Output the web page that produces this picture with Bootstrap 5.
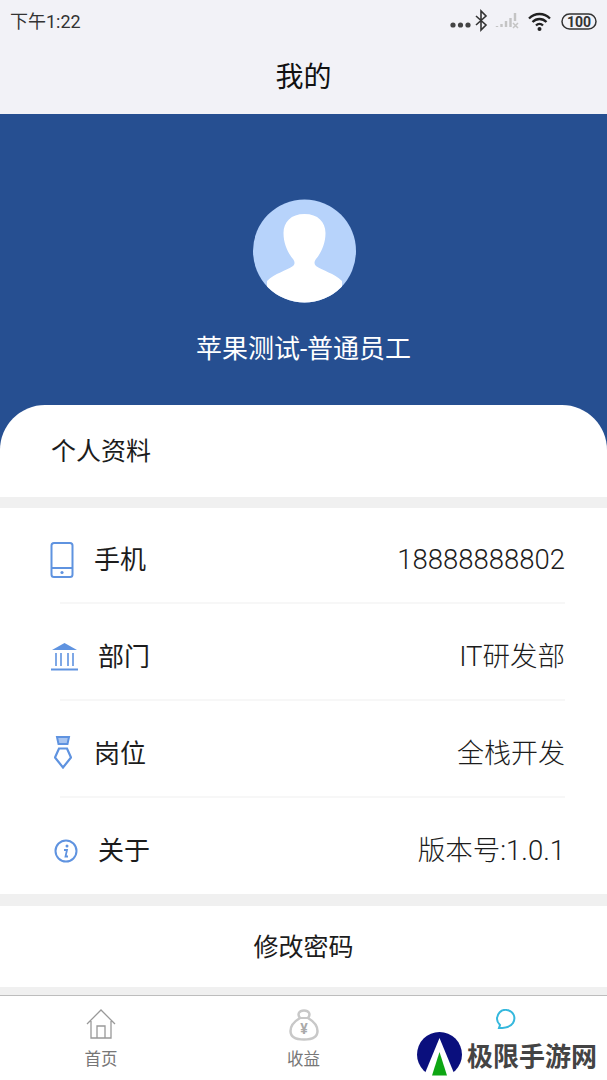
<!DOCTYPE html>
<html lang="zh-CN">

<head>
  <meta charset="UTF-8">
  <title>我的</title>
  <link href="https://cdn.jsdelivr.net/npm/bootstrap@5.3.3/dist/css/bootstrap.min.css" rel="stylesheet">
  <script src="https://cdn.jsdelivr.net/npm/bootstrap@5.3.3/dist/js/bootstrap.bundle.min.js"></script>
  <style>
    body {
      font-family: "Roboto", "Noto Sans CJK SC", sans-serif;
      background: #f0f0f0;
      color: #1c1c1c;
    }

    .phone {
      width: 607px;
      height: 1080px;
      overflow: hidden;
      position: relative;
    }

    .top-area {
      height: 114px;
      background: #f2f2f7;
    }

    .status-row {
      height: 42px;
      padding: 0 7px 0 10px;
    }

    .status-time {
      font-size: 18px;
      color: #333;
    }

    .page-title {
      height: 72px;
      font-size: 28px;
      line-height: 72px;
      color: #111;
    }

    .blue-area {
      height: 383px;
      background: #264f91;
      padding-top: 85px;
    }

    .avatar-pic {
      margin-left: 253px;
    }

    .user-name {
      margin-top: 29px;
      height: 34px;
      font-size: 26px;
      line-height: 34px;
      color: #fff;
    }

    .profile-head {
      margin-top: 39px;
      height: 92px;
      background: #fff;
      border-radius: 45px 45px 0 0;
      padding: 30px 0 0 51px;
      font-size: 25px;
      line-height: 34px;
    }

    .gap-band {
      height: 11px;
      background: #f0f0f0;
    }

    .gap-tall {
      height: 12px;
    }

    .info-list {
      background: #fff;
      height: 386px;
    }

    .info-row {
      height: 97px;
      font-size: 26px;
      padding: 7px 42px 0 0;
      position: relative;
    }

    .info-row + .info-row::before {
      content: "";
      position: absolute;
      left: 60px;
      right: 42px;
      top: -3px;
      border-top: 2px solid #f7f7f7;
    }

    .row-value {
      font-size: 27.5px;
      font-weight: 300;
    }

    .row-value-cjk {
      font-size: 27px;
      font-weight: 300;
    }

    .icon-cell {
      width: 94px;
      padding-left: 50px;
      flex: none;
    }

    .tie-icon {
      margin: -3px 0 0 4px;
    }

    .change-pass {
      height: 81px;
      background: #fff;
      font-size: 25px;
      line-height: 83px;
    }

    .tab-bar {
      height: 85px;
      background: #fff;
      border-top: 1px solid #bdbdbd;
      margin-top: 8px;
    }

    .tab-cell {
      width: 202px;
      font-size: 16.5px;
      color: #777;
      padding-top: 13px;
    }

    .tab-label {
      line-height: 24px;
      margin-top: 7px;
    }

    .mark-logo {
      position: absolute;
      left: 417px;
      top: 1032px;
      display: flex;
      align-items: center;
      gap: 5px;
      background: rgba(255, 255, 255, .85);
    }

    .mark-text {
      font-family: "Noto Sans CJK SC", sans-serif;
      font-size: 26px;
      font-weight: 700;
      color: #444;
      line-height: 44px;
    }
  </style>
</head>

<body>
  <div class="phone">
    <div class="top-area">
      <div class="status-row d-flex align-items-center justify-content-between">
        <span class="status-time">下午1:22</span>
        <svg width="150" height="24" viewBox="0 0 150 24">
          <circle cx="3" cy="16" r="2.6" fill="#444" />
          <circle cx="10.5" cy="16" r="2.6" fill="#444" />
          <circle cx="18" cy="16" r="2.6" fill="#444" />
          <path d="M26 7l10 9-5 5V2l5 5-10 9" fill="none" stroke="#333" stroke-width="1.6" />
          <path d="M47 17v1M51.5 15v3M56 12v6M60.5 9v9M65 4v8" stroke="#c4c4c4" stroke-width="2.4" fill="none" />
          <path d="M63 14l5 5m0-5l-5 5" stroke="#c4c4c4" stroke-width="1.5" fill="none" />
          <path d="M79 9.5c6-6 15-6 21 0M82.5 13c4-4 10-4 14 0M86 16.5c2-2 5-2 7 0" stroke="#222" stroke-width="2.3" fill="none" />
          <circle cx="89.5" cy="20" r="2" fill="#222" />
          <rect x="112" y="5" width="34" height="15" rx="7.5" fill="none" stroke="#333" stroke-width="1.5" />
          <text x="129" y="17.5" text-anchor="middle" font-family="Roboto, sans-serif" font-size="14" font-weight="700" fill="#333">100</text>
        </svg>
      </div>
      <div class="page-title text-center">我的</div>
    </div>

    <div class="blue-area text-center">
      <svg class="d-block avatar-pic" width="103" height="104" viewBox="0 0 103 104">
        <defs>
          <clipPath id="avatarClip">
            <circle cx="51.5" cy="52" r="51.5" />
          </clipPath>
        </defs>
        <circle cx="51.5" cy="52" r="51.5" fill="#b7d3fb" />
        <path clip-path="url(#avatarClip)" fill="#fff" d="M51.5 15C38 15 30.5 23 30.5 34C30.5 45 35 54 40 60C42 63 42 65 40 67C33 72 22 74 14 82L14 104H89V82C81 74 70 72 63 67C61 65 61 63 63 60C68 54 72.5 45 72.5 34C72.5 23 65 15 51.5 15Z" />
      </svg>
      <div class="user-name">苹果测试-普通员工</div>
      <div class="profile-head text-start">个人资料</div>
    </div>

    <div class="gap-band"></div>

    <div class="info-list">
      <div class="info-row d-flex align-items-center">
        <div class="icon-cell">
          <svg class="d-block" width="24" height="36" viewBox="0 0 24 36">
            <rect x="1.5" y="1" width="21" height="34" rx="2.5" fill="none" stroke="#5f93e0" stroke-width="2" />
            <path d="M1.5 26h21" stroke="#5f93e0" stroke-width="2" />
            <circle cx="12" cy="30.5" r="1.6" fill="#5f93e0" />
          </svg>
        </div>
        <span class="flex-grow-1">手机</span>
        <span class="row-value">18888888802</span>
      </div>
      <div class="info-row d-flex align-items-center">
        <div class="icon-cell">
          <svg class="d-block" width="29" height="28" viewBox="0 0 29 28">
            <path d="M14.5 0L27 7H2z" fill="#5f93e0" />
            <path d="M6 10v13M11 10v13M18 10v13M23 10v13" stroke="#5f93e0" stroke-width="1.6" />
            <path d="M1 26.5h27" stroke="#5f93e0" stroke-width="2" />
          </svg>
        </div>
        <span class="flex-grow-1 ps-1">部门</span>
        <span class="row-value">IT研发部</span>
      </div>
      <div class="info-row d-flex align-items-center">
        <div class="icon-cell">
          <svg class="d-block tie-icon" width="18" height="33" viewBox="0 0 18 33">
            <path d="M3 1h12l-1.5 7h-9z" fill="#a9c5f0" stroke="#5f93e0" stroke-width="2" />
            <path d="M5 12.5h8l4 9-8 10-8-10z" fill="none" stroke="#5f93e0" stroke-width="2.2" />
          </svg>
        </div>
        <span class="flex-grow-1">岗位</span>
        <span class="row-value-cjk">全栈开发</span>
      </div>
      <div class="info-row d-flex align-items-center">
        <div class="icon-cell">
          <svg class="d-block ms-1" width="24" height="24" viewBox="0 0 24 24">
            <circle cx="12" cy="12" r="10.5" fill="none" stroke="#5f93e0" stroke-width="2" />
            <circle cx="13" cy="7" r="1.5" fill="#5f93e0" />
            <path d="M10 11h3l-1.5 6.500H14" fill="none" stroke="#5f93e0" stroke-width="1.8" />
          </svg>
        </div>
        <span class="flex-grow-1 ps-1">关于</span>
        <span class="row-value">版本号:1.0.1</span>
      </div>
    </div>

    <div class="gap-band gap-tall"></div>

    <div class="change-pass text-center">修改密码</div>

    <div class="tab-bar d-flex justify-content-between">
      <div class="tab-cell text-center">
        <svg class="d-block mx-auto" width="30" height="32" viewBox="0 0 30 32">
          <path d="M1 15L15 1l14 14M5 12v17h20V12M11 29V17h8v12" fill="none" stroke="#999" stroke-width="1.3" />
        </svg>
        <div class="tab-label">首页</div>
      </div>
      <div class="tab-cell text-center">
        <svg class="d-block mx-auto" width="30" height="32" viewBox="0 0 30 32">
          <path d="M11 9C8 5 10 1.5 15 1.5S22 5 19 9c5 3 9.500 8 9.500 13 0 6-6 8.500-13.500 8.500S1.500 28 1.500 22c0-5 4.500-10 9.500-13z" fill="none" stroke="#c8c8c8" stroke-width="2.5" />
          <path d="M11 9h8" stroke="#c8c8c8" stroke-width="2" />
          <text x="15" y="25" text-anchor="middle" font-family="Roboto, sans-serif" font-size="14" font-weight="700" fill="#aaa">¥</text>
        </svg>
        <div class="tab-label">收益</div>
      </div>
      <div class="tab-cell text-center">
        <svg class="d-block mx-auto" width="20" height="20" viewBox="0 0 20 20">
          <path d="M3 19c3 0 11 0 14-5 3-5 1-12-6-13C5 0 1 5 1 10c0 3 2 5 3 6z" fill="none" stroke="#35b8dd" stroke-width="2" />
        </svg>
      </div>
    </div>

    <div class="mark-logo">
      <svg width="45" height="46" viewBox="0 0 45 46">
        <circle cx="22.5" cy="22.5" r="22.5" fill="#0a0f7d" />
        <path d="M22.5 6L6 46h33z" fill="#fff" />
        <path d="M22.5 20L15 43.5h15z" fill="#0da613" />
      </svg>
      <span class="mark-text">极限手游网</span>
    </div>
  </div>
</body>

</html>
